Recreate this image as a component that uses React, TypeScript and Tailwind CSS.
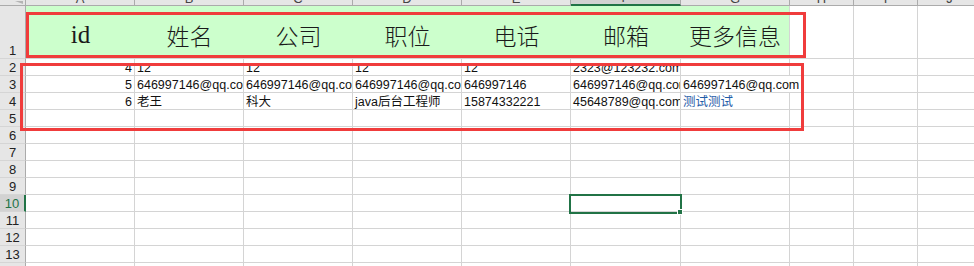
import React from "react";

const COLS = ["A", "B", "C", "D", "E", "F", "G", "H", "I", "J"];
const HEADERS = ["id", "姓名", "公司", "职位", "电话", "邮箱", "更多信息"];

const ROWS: (string | null)[][] = [
  ["4", "12", "12", "12", "12", "2323@123232.com", null],
  ["5", "646997146@qq.com", "646997146@qq.com", "646997146@qq.com", "646997146", "646997146@qq.com", "646997146@qq.com"],
  ["6", "老王", "科大", "java后台工程师", "15874332221", "45648789@qq.com", "测试测试"],
];

const SANS = "font-['Liberation_Sans','Noto_Sans_CJK_SC',sans-serif]";

function RowHead({ n, active }: { n: number; active?: boolean }) {
  return (
    <div
      className={`flex items-end justify-center border-b border-[#d5d5d5] text-[13px] leading-[15px] ${SANS} ${
        active
          ? "border-r-2 border-r-[#217346] bg-[#d2d2d2] text-[#217346]"
          : "border-r border-r-[#ababab] bg-[#e6e6e6] text-[#222]"
      }`}
    >
      {n}
    </div>
  );
}

function Cell({
  text,
  right,
  spill,
  blue,
}: {
  text?: string | null;
  right?: boolean;
  spill?: boolean;
  blue?: boolean;
}) {
  return (
    <div
      className={`flex items-end whitespace-nowrap border-b border-[#d4d4d4] px-[2px] text-[12.5px] leading-[14px] ${SANS} ${
        right ? "justify-end" : "justify-start"
      } ${spill ? "relative z-10 overflow-visible" : "overflow-hidden border-r"} ${
        blue ? "text-[#1f5ca8]" : "text-[#111]"
      }`}
    >
      {text}
    </div>
  );
}

export default function App() {
  const emptyRows = [5, 6, 7, 8, 9, 10, 11, 12, 13, 14];
  return (
    <div className="relative h-[266px] w-[974px] overflow-hidden bg-white">
      <div className="grid grid-cols-[26px_109px_109px_109px_109px_109px_110px_109px_64px_64px_64px] grid-rows-[6px_53px_repeat(13,17px)]">
        {/* column header strip */}
        <div className="relative border-b border-r border-[#ababab] bg-[#e6e6e6]">
          <div className="absolute right-[2px] bottom-[1px] h-0 w-0 border-l-[8px] border-t-[3px] border-l-transparent border-t-[#b4b4b4]" />
        </div>
        {COLS.map((c) => (
          <div
            key={c}
            className={`flex items-end justify-center overflow-hidden text-[13px] leading-[13px] text-[#444] ${SANS} ${
              c === "F"
                ? "border-b-2 border-r border-b-[#217346] border-r-[#ababab] bg-[#d2d2d2]"
                : "border-b border-r border-[#ababab] bg-[#e6e6e6]"
            }`}
          >
            {c}
          </div>
        ))}

        {/* row 1: headers */}
        <RowHead n={1} />
        {HEADERS.map((h, i) => (
          <div
            key={h}
            className={`flex items-end justify-center border-b border-b-[#d4d4d4] bg-[#ccffcc] leading-none text-[#1a1a1a] ${
              i === 0
                ? "pb-[11px] font-['Liberation_Serif',serif] text-[25px]"
                : "pb-[11px] font-['Noto_Sans_CJK_SC',sans-serif] text-[23px] font-light"
            } ${i === HEADERS.length - 1 ? "border-r border-r-[#d4d4d4]" : ""}`}
          >
            {h}
          </div>
        ))}
        {[0, 1, 2].map((k) => (
          <div key={k} className="border-b border-r border-[#d4d4d4]" />
        ))}

        {/* data rows */}
        {ROWS.map((row, r) => (
          <React.Fragment key={r}>
            <RowHead n={r + 2} />
            {row.map((t, c) => (
              <Cell
                key={c}
                text={t}
                right={c === 0}
                spill={r === 1 && c === 6}
                blue={r === 2 && c === 6}
              />
            ))}
            {[0, 1, 2].map((k) => (
              <div key={k} className="border-b border-r border-[#d4d4d4]" />
            ))}
          </React.Fragment>
        ))}

        {emptyRows.map((n) => (
          <React.Fragment key={n}>
            <RowHead n={n} active={n === 10} />
            {COLS.map((c) => (
              <div key={c} className="border-b border-r border-[#d4d4d4]" />
            ))}
          </React.Fragment>
        ))}
      </div>

      {/* annotation boxes */}
      <div className="absolute left-[26px] top-[12px] h-[46px] w-[780px] border-[3px] border-[#f03c3c]" />
      <div className="absolute left-[20px] top-[63px] h-[68px] w-[784px] border-[3px] border-[#f03c3c]" />

      {/* selected cell F10 */}
      <div className="absolute left-[569px] top-[194px] h-[20px] w-[113px] border-2 border-[#217346]" />
      <div className="absolute left-[677px] top-[209px] h-[6px] w-[6px] border border-white bg-[#217346]" />
    </div>
  );
}
